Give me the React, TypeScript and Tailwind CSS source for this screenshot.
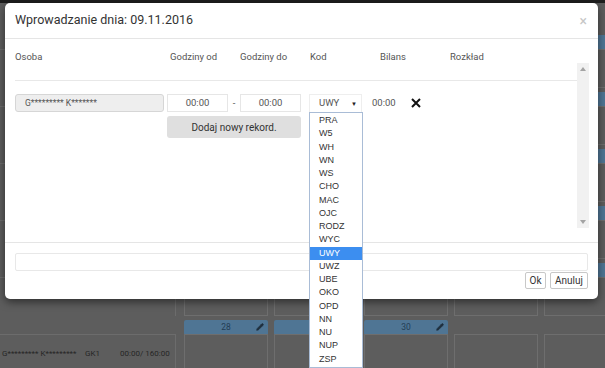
import { Pencil } from "lucide-react";

const codes = [
  "PRA", "W5", "WH", "WN", "WS", "CHO", "MAC", "OJC", "RODZ", "WYC",
  "UWY", "UWZ", "UBE", "OKO", "OPD", "NN", "NU", "NUP", "ZSP",
];

const columns = [
  { label: "Osoba", w: "w-[155px]" },
  { label: "Godziny od", w: "w-[70px]" },
  { label: "Godziny do", w: "w-[70px]" },
  { label: "Kod", w: "w-[70px]" },
  { label: "Bilans", w: "w-[70px]" },
  { label: "Rozkład", w: "w-[70px]" },
];

const weeks = [
  { days: ["", "", "", "", ""], bars: 5 },
  { days: ["", "", "", "", ""], bars: 5 },
  { days: ["", "", "", "", ""], bars: 5 },
  { days: ["", "", "", "", ""], bars: 5 },
  { days: ["", "", "", "", ""], bars: 5 },
  { days: ["28", "29", "30", "", ""], bars: 3 },
];

function Background() {
  return (
    <div className="flex flex-col w-full">
      <div className="h-[3px] bg-[#1e1e1e]" />
      <div className="h-[28px]" />
      {weeks.map((week, i) => (
        <div key={i} className="flex gap-[8px] h-[57px] pt-[4px]">
          <div className="w-[176px] shrink-0 flex flex-col">
            <div className="h-[14px]" />
            <div className="flex-1 border-t border-r border-[#6c6c6c] flex items-center pl-[2px] text-[8px] text-[#262626] whitespace-nowrap">
              {i === weeks.length - 1 && (
                <>
                  <span className="w-[83px]">G********* K*********</span>
                  <span className="w-[35px]">GK1</span>
                  <span>00:00/ 160:00</span>
                </>
              )}
            </div>
          </div>
          <div className="flex gap-[6px] shrink-0">
            {week.days.map((d, j) => (
              <div key={j} className="w-[84px] shrink-0 flex flex-col">
                {j < week.bars ? (
                  <div className="h-[14px] bg-[#4f7594] rounded-t-[2px] flex items-center justify-center relative text-[8.5px] text-[#233d55]">
                    {d}
                    <Pencil className="absolute right-[4px] w-[8px] h-[8px] text-[#1f2f3d] fill-[#1f2f3d]" />
                  </div>
                ) : (
                  <div className="h-[14px]" />
                )}
                <div className="flex-1 border border-[#6e6e6e]" />
              </div>
            ))}
          </div>
        </div>
      ))}
    </div>
  );
}

export default function App() {
  return (
    <div className="relative w-[605px] h-[368px] overflow-hidden bg-[#5d5d5d] font-['Roboto',sans-serif]">
      <Background />

      <div className="absolute left-[5px] top-[3px] w-[593px] h-[296px] bg-white rounded-[5px] shadow-[0_3px_9px_rgba(0,0,0,0.5)] flex flex-col">
        {/* Header */}
        <div className="h-[36px] shrink-0 flex items-center justify-between pl-[10px] pr-[11px] border-b border-[#e5e5e5]">
          <span className="text-[12.5px] text-[#333]">Wprowadzanie dnia: 09.11.2016</span>
          <span className="text-[14px] leading-none text-[#c6c6c6]">×</span>
        </div>

        {/* Body */}
        <div className="h-[203px] shrink-0 flex pl-[10px] pr-[9px]">
          <div className="flex-1 flex flex-col">
            <div className="h-[42px] flex pt-[11px] border-b border-[#e8e8e8] text-[9.5px] text-[#555]">
              {columns.map((c) => (
                <span key={c.label} className={c.w}>
                  {c.label}
                </span>
              ))}
            </div>

            <div className="mt-[13px] flex items-start text-[9.5px] text-[#555]">
              <div className="w-[149px] h-[18px] bg-[#eeeeee] border border-[#d6d6d6] rounded-[3px] pl-[9px] flex items-center text-[8.5px]">
                G********* K*******
              </div>

              <div className="ml-[3px] w-[134px] flex flex-col">
                <div className="flex items-center">
                  <div className="w-[61px] h-[18px] border border-[#e6e6e6] flex items-center justify-center">00:00</div>
                  <div className="flex-1 text-center">-</div>
                  <div className="w-[61px] h-[18px] border border-[#e6e6e6] flex items-center justify-center">00:00</div>
                </div>
                <div className="mt-[4px] h-[22px] bg-[#dfdfdf] rounded-[3px] flex items-center justify-center text-[10px] text-[#333]">
                  Dodaj nowy rekord.
                </div>
              </div>

              <div className="ml-[8px] w-[53px] h-[18px] relative">
                <div className="h-full pl-[9px] pr-[4px] flex items-center justify-between border-t border-x border-[#eeeeee]">
                  <span className="text-[9.5px]">UWY</span>
                  <span className="text-[6px] text-[#222]">▼</span>
                </div>
                <div className="absolute top-[18px] left-0 w-[54px] border border-[#a9bcd6] bg-white py-[1px] font-['Liberation_Sans',sans-serif]">
                  {codes.map((c) =>
                    c === "UWY" ? (
                      <div key={c} className="h-[13.25px] leading-[13.25px] pl-[9px] text-[9px] bg-[#3c8ef0] text-white">
                        {c}
                      </div>
                    ) : (
                      <div key={c} className="h-[13.25px] leading-[13.25px] pl-[9px] text-[9px] text-[#333]">
                        {c}
                      </div>
                    )
                  )}
                </div>
              </div>

              <div className="ml-[10px] h-[18px] flex items-center">00:00</div>

              <div className="ml-[15px] h-[18px] flex items-center">
                <svg width="10" height="10" viewBox="0 0 10 10">
                  <path d="M1 1L9 9M9 1L1 9" stroke="#111" strokeWidth="2" />
                </svg>
              </div>
            </div>
          </div>

          {/* Scrollbar */}
          <div className="w-[12px] mt-[24px] h-[165px] bg-[#f1f1f1] flex flex-col justify-between items-center py-[4px]">
            <svg width="6" height="4" viewBox="0 0 6 4">
              <path d="M3 0L6 4H0Z" fill="#a3a3a3" />
            </svg>
            <svg width="6" height="4" viewBox="0 0 6 4">
              <path d="M0 0H6L3 4Z" fill="#a3a3a3" />
            </svg>
          </div>
        </div>

        {/* Footer */}
        <div className="flex-1 border-t border-[#e5e5e5] px-[10px] pt-[10px] flex flex-col">
          <div className="h-[18px] border border-[#e8e8e8] rounded-[2px]" />
          <div className="mt-[1px] flex justify-end gap-[4px]">
            <button className="w-[21px] h-[17px] border border-[#c8c8c8] rounded-[2px] bg-white text-[10px] text-[#333] flex items-center justify-center">
              Ok
            </button>
            <button className="w-[38px] h-[17px] border border-[#c8c8c8] rounded-[2px] bg-white text-[10px] text-[#333] flex items-center justify-center">
              Anuluj
            </button>
          </div>
        </div>
      </div>
    </div>
  );
}
